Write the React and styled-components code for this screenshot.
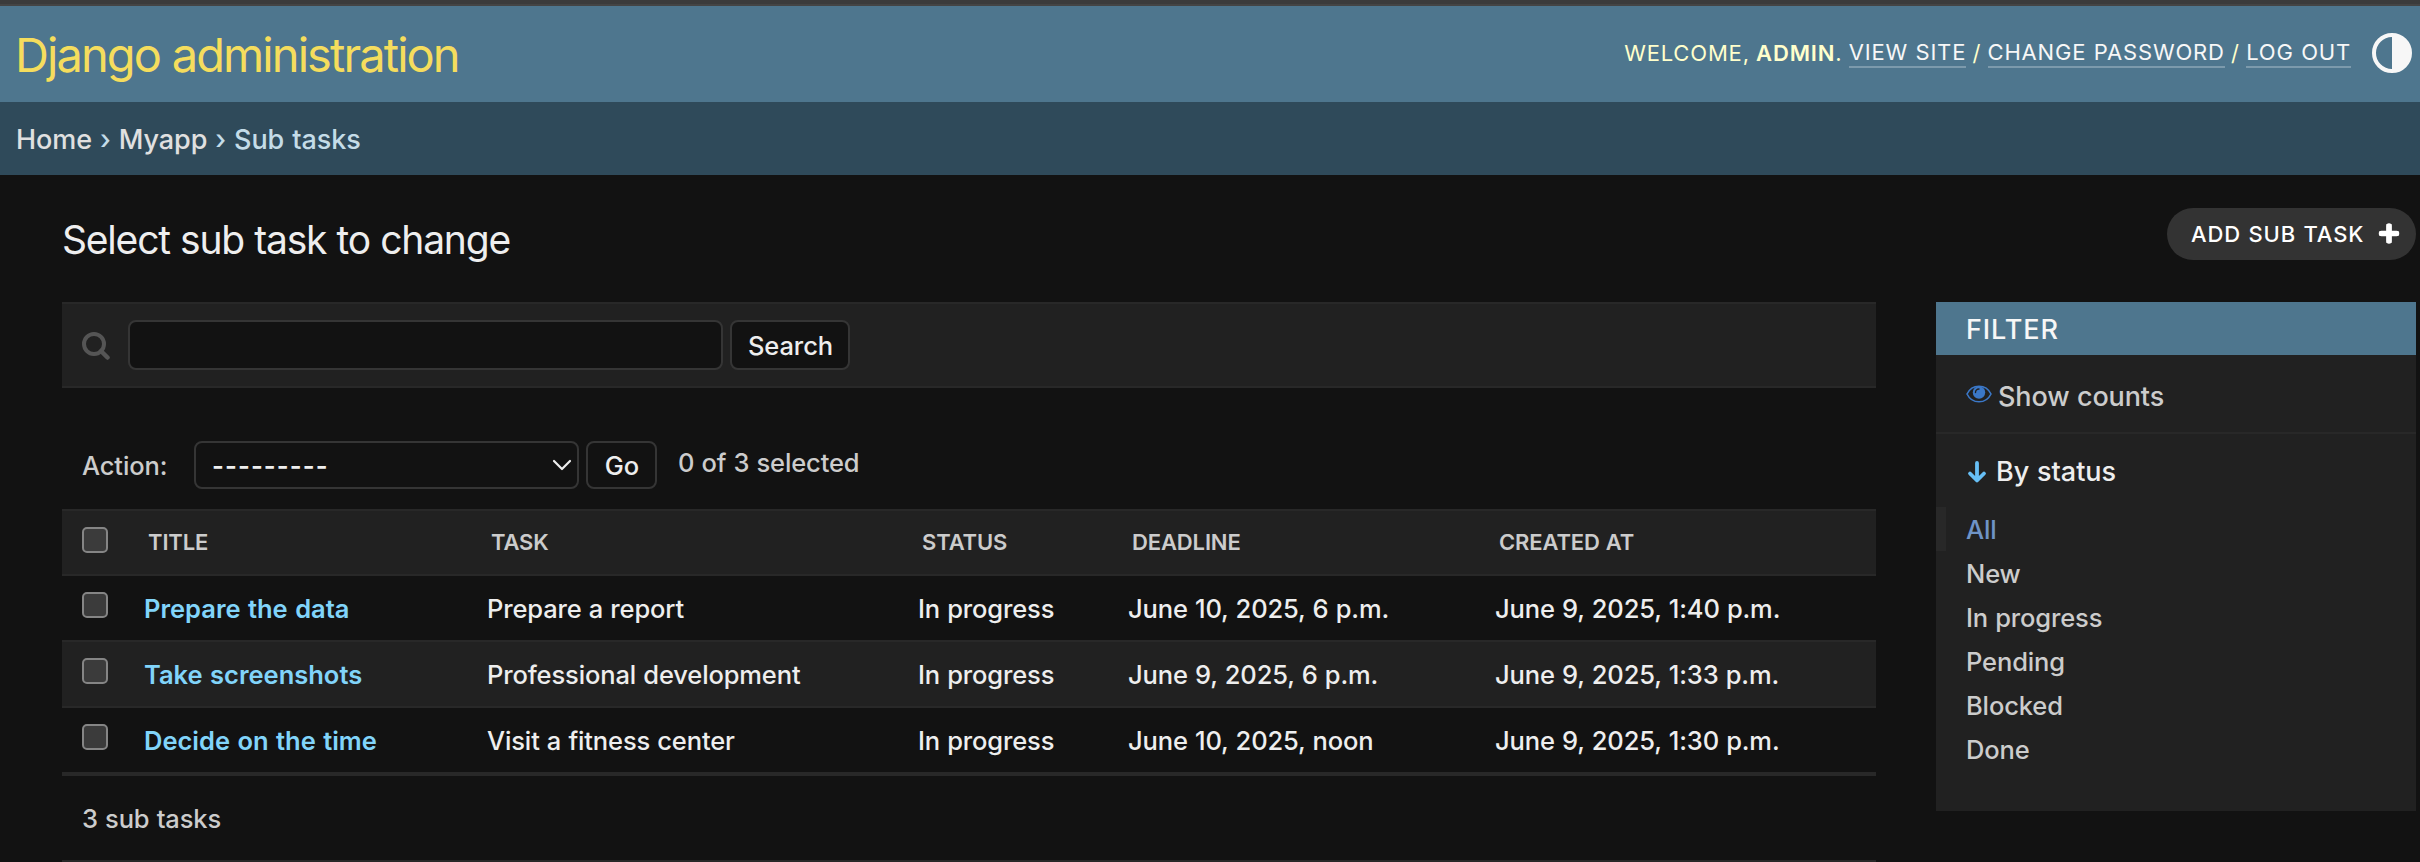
import React from "react";
import styled, { createGlobalStyle, css } from "styled-components";

const Global = createGlobalStyle`
  * { box-sizing: border-box; }
  body {
    margin: 0;
    background: #121212;
    color: #eeeeee;
    font-family: Inter, "Liberation Sans", sans-serif;
    font-size: 25.5px;
    font-weight: 450;
    letter-spacing: -0.13px;
    word-spacing: 0.5px;
    overflow: hidden;
  }
  a { color: inherit; text-decoration: none; }
`;

const Page = styled.div`
  height: 862px;
  overflow: hidden;
  display: flex;
  flex-direction: column;
`;

const WindowEdge = styled.div`
  flex: none;
  height: 6px;
  background: #3b3b3b;
  border-bottom: 2px solid #444444;
`;

const Header = styled.header`
  flex: none;
  height: 96px;
  display: flex;
  justify-content: space-between;
  align-items: flex-start;
  padding: 0 8px 0 15px;
  background: #4e768e;
`;

const Branding = styled.h1`
  margin: 18px 0 0;
  font-size: 47px;
  line-height: 62px;
  font-weight: 380;
  letter-spacing: -1.92px;
  color: #f5dd5d;
`;

const UserTools = styled.div`
  display: flex;
  align-items: center;
  height: 40px;
  margin-top: 27px;
  font-size: 22px;
  font-weight: 400;
  letter-spacing: 0.82px;
  text-transform: uppercase;
  white-space: pre;
  color: #ffffcc;

  span { word-spacing: -0.7px; }
  strong { font-weight: 600; }
  a {
    color: #f7f7f7;
    line-height: 26px;
    padding-bottom: 1px;
    border-bottom: 2px solid #7c9aac;
  }
  svg { margin-left: 21px; }
`;

const Breadcrumbs = styled.nav`
  flex: none;
  height: 73px;
  padding: 1px 0 0 16px;
  font-size: 27px;
  line-height: 73px;
  letter-spacing: -0.05px;
  word-spacing: 0.8px;
  background: #2f4a5a;
  color: #c4dce8;
  a { color: #e0e0e0; }
`;

const Content = styled.main`
  flex: 1;
  min-height: 0;
  padding: 33px 4px 0 62px;
`;

const TitleRow = styled.div`
  display: flex;
  justify-content: space-between;
  align-items: flex-start;
  height: 94px;
`;

const PageTitle = styled.h2`
  margin: 7px 0 0;
  font-size: 39px;
  line-height: 50px;
  font-weight: 390;
  letter-spacing: -1.2px;
`;

const AddButton = styled.a`
  display: flex;
  align-items: center;
  justify-content: space-between;
  width: 249px;
  height: 52px;
  padding: 0 16px 0 24px;
  border-radius: 26px;
  background: #333333;
  color: #ffffff;
  font-size: 22px;
  letter-spacing: 0.92px;
  text-transform: uppercase;
`;

const Columns = styled.div`
  display: grid;
  grid-template-columns: 1814px 480px;
  column-gap: 60px;
  align-items: start;
`;

const SearchBar = styled.div`
  display: flex;
  align-items: center;
  height: 86px;
  padding-left: 20px;
  border: solid #282828;
  border-width: 2px 0;
  background: #212121;
  svg { margin-top: 2px; }
`;

const field = css`
  border: 2px solid #353535;
  border-radius: 8px;
  background: #121212;
  color: #eeeeee;
  font: inherit;
  padding: 0;
`;

const SearchInput = styled.input`
  ${field}
  width: 595px;
  height: 50px;
  margin: 0 7px 0 18px;
`;

const Button = styled.button`
  ${field}
  width: ${(p) => p.$width}px;
  height: ${(p) => p.$height}px;
  padding: 1px 0 0 1px;
  letter-spacing: -0.1px;
`;

const Actions = styled.div`
  display: flex;
  align-items: center;
  height: 48px;
  margin: 53px 0 20px;
  padding-left: 20px;
  color: #cccccc;
`;

const ActionLabel = styled.span`
  width: 112px;
  padding-top: 1px;
`;

const ActionSelect = styled.div`
  ${field}
  display: flex;
  align-items: center;
  justify-content: space-between;
  width: 385px;
  height: 48px;
  margin-right: 7px;
  padding: 0 5px 0 16px;
  span {
    font-weight: 600;
    letter-spacing: 1.1px;
  }
`;

const Counter = styled.span`
  margin-left: 21px;
  padding-bottom: 5px;
`;

const Row = styled.div`
  display: grid;
  grid-template-columns: 82px 343px 431px 210px 367px 1fr;
  height: 66px;
  border-bottom: 2px solid #282828;
  background: ${(p) => (p.$shaded ? "#212121" : "#121212")};
  line-height: 66px;
  white-space: nowrap;
`;

const HeadRow = styled(Row)`
  height: 67px;
  border-top: 2px solid #282828;
  font-size: 22px;
  font-weight: 600;
  color: #cccccc;
  line-height: 62px;
  text-transform: uppercase;
  span { padding-left: 4px; }
`;

const Table = styled.div`
  border-bottom: 2px solid #282828;
`;

const Checkbox = styled.i`
  width: 26px;
  height: 26px;
  margin: 16px 0 0 20px;
  border: 2px solid #858585;
  border-radius: 5px;
  background: #3b3b3b;
`;

const TitleLink = styled.a`
  font-weight: 600;
  letter-spacing: 0;
  word-spacing: 1px;
  color: #81d4fa;
`;

const Paginator = styled.div`
  height: 86px;
  padding-left: 20px;
  border-bottom: 2px solid #282828;
  line-height: 86px;
  color: #cccccc;
`;

const Filter = styled.aside`
  height: 509px;
  background: #212121;
`;

const FilterTitle = styled.h2`
  margin: 0;
  height: 53px;
  padding-left: 30px;
  background: #4e768e;
  font-size: 27px;
  font-weight: 450;
  line-height: 55px;
  letter-spacing: 0.9px;
  color: #f7f7f7;
`;

const ShowCounts = styled.div`
  display: flex;
  align-items: center;
  height: 79px;
  padding: 5px 0 0 30px;
  border-bottom: 2px solid #282828;
  font-size: 27px;
  color: #cccccc;
  svg { margin: 0 6px 4px 0; }
`;

const FilterGroup = styled.h3`
  display: flex;
  align-items: center;
  height: 73px;
  margin: 0;
  padding: 2px 0 0 31px;
  font-size: 27px;
  font-weight: 450;
  letter-spacing: 0;
  svg { margin-right: 9px; }
`;

const Choices = styled.ul`
  margin: 0;
  padding: 0;
  list-style: none;
`;

const Choice = styled.li`
  height: 44px;
  padding-left: ${(p) => (p.$selected ? 20 : 30)}px;
  border-left: ${(p) => (p.$selected ? "10px solid #282828" : "0")};
  line-height: 46px;
  color: ${(p) => (p.$selected ? "#6f94c6" : "#cccccc")};
`;

const rows = [
  ["Prepare the data", "Prepare a report", "In progress", "June 10, 2025, 6 p.m.", "June 9, 2025, 1:40 p.m."],
  ["Take screenshots", "Professional development", "In progress", "June 9, 2025, 6 p.m.", "June 9, 2025, 1:33 p.m."],
  ["Decide on the time", "Visit a fitness center", "In progress", "June 10, 2025, noon", "June 9, 2025, 1:30 p.m."],
];

const ThemeIcon = () => (
  <svg width="40" height="40" viewBox="0 0 40 40">
    <circle cx="20" cy="20" r="18" fill="none" stroke="#f7f7f7" strokeWidth="4" />
    <path d="M20 2a18 18 0 0 1 0 36z" fill="#f7f7f7" />
  </svg>
);

const PlusIcon = () => (
  <svg width="22" height="22" viewBox="0 0 22 22">
    <path d="M11 1v19M1.500 10.500h19" stroke="#fff" strokeWidth="5" />
    <path d="M11 3v15M3.500 10.500h15" stroke="#fff" strokeWidth="5.500" strokeLinecap="round" />
  </svg>
);

const SearchIcon = () => (
  <svg width="28" height="28" viewBox="0 0 28 28">
    <circle cx="12" cy="12" r="10" fill="none" stroke="#555" strokeWidth="4" />
    <path d="M19 19l6.500 6.500" stroke="#555" strokeWidth="4.500" strokeLinecap="round" />
  </svg>
);

const ChevronIcon = () => (
  <svg width="20" height="12" viewBox="0 0 20 12">
    <path d="M2 2l8 8 8-8" fill="none" stroke="#eee" strokeWidth="2.2" strokeLinecap="round" strokeLinejoin="round" />
  </svg>
);

const EyeIcon = () => (
  <svg width="26" height="18" viewBox="0 0 26 18">
    <path d="M1 9C6-1.400 20-1.400 25 9C20 19.400 6 19.400 1 9z" fill="none" stroke="#3b78c8" strokeWidth="1.600" />
    <circle cx="13" cy="7.500" r="6.200" fill="#3b78c8" />
    <path d="M9.500 7.500a3.500 3.500 0 0 1 3.500-3.500" fill="none" stroke="#212121" strokeWidth="1.400" strokeLinecap="round" />
  </svg>
);

const ArrowIcon = () => (
  <svg width="20" height="24" viewBox="0 0 20 24">
    <path d="M10 3v17M3 13.500l7 7 7-7" fill="none" stroke="#67bff5" strokeWidth="3.800" strokeLinecap="round" strokeLinejoin="round" />
  </svg>
);

export default function App() {
  return (
    <Page>
      <Global />
      <WindowEdge />
      <Header>
        <Branding>Django administration</Branding>
        <UserTools>
          <span>Welcome, <strong>admin</strong>. </span>
          <a>View site</a>
          <span> / </span>
          <a>Change password</a>
          <span> / </span>
          <a>Log out</a>
          <ThemeIcon />
        </UserTools>
      </Header>
      <Breadcrumbs>
        <a>Home</a> › <a>Myapp</a> › Sub tasks
      </Breadcrumbs>
      <Content>
        <TitleRow>
          <PageTitle>Select sub task to change</PageTitle>
          <AddButton>
            Add sub task
            <PlusIcon />
          </AddButton>
        </TitleRow>
        <Columns>
          <section>
            <SearchBar>
              <SearchIcon />
              <SearchInput />
              <Button $width={120} $height={50}>Search</Button>
            </SearchBar>
            <Actions>
              <ActionLabel>Action:</ActionLabel>
              <ActionSelect>
                <span>---------</span>
                <ChevronIcon />
              </ActionSelect>
              <Button $width={71} $height={48}>Go</Button>
              <Counter>0 of 3 selected</Counter>
            </Actions>
            <Table>
              <HeadRow $shaded>
                <Checkbox />
                <span>Title</span>
                <span>Task</span>
                <span>Status</span>
                <span>Deadline</span>
                <span>Created at</span>
              </HeadRow>
              {rows.map(([title, task, status, deadline, created], i) => (
                <Row key={title} $shaded={i % 2 === 1}>
                  <Checkbox />
                  <TitleLink>{title}</TitleLink>
                  <span>{task}</span>
                  <span>{status}</span>
                  <span>{deadline}</span>
                  <span>{created}</span>
                </Row>
              ))}
            </Table>
            <Paginator>3 sub tasks</Paginator>
          </section>
          <Filter>
            <FilterTitle>FILTER</FilterTitle>
            <ShowCounts>
              <EyeIcon />
              Show counts
            </ShowCounts>
            <FilterGroup>
              <ArrowIcon />
              By status
            </FilterGroup>
            <Choices>
              <Choice $selected>All</Choice>
              {["New", "In progress", "Pending", "Blocked", "Done"].map((name) => (
                <Choice key={name}>{name}</Choice>
              ))}
            </Choices>
          </Filter>
        </Columns>
      </Content>
    </Page>
  );
}
